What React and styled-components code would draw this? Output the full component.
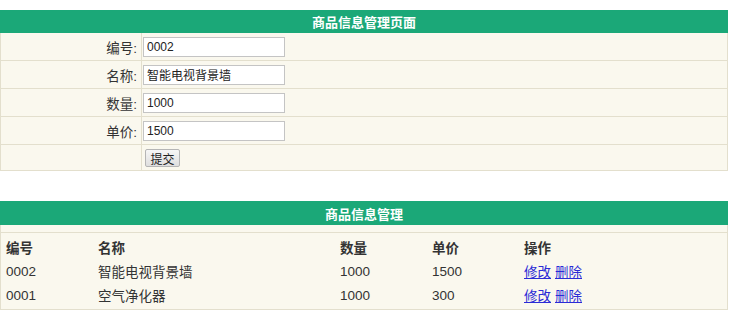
import React from 'react'
import styled, { createGlobalStyle } from 'styled-components'

const GlobalStyle = createGlobalStyle`
  body {
    margin: 0;
    background: #fff;
    font-family: 'Liberation Sans', 'Noto Sans CJK SC', sans-serif;
    color: #333;
  }
`

const Page = styled.div`
  padding-top: 10px;
  width: 728px;
  display: flex;
  flex-direction: column;
  gap: 30px;
`

const Panel = styled.section`
  background: #faf8ee;
  border: 1px solid #e3dfcd;
  border-top: none;
`

const Title = styled.div`
  height: ${p => p.$h}px;
  background: #1ba878;
  color: #fff;
  font-weight: bold;
  font-size: 13px;
  display: flex;
  align-items: center;
  justify-content: center;
  margin-right: -1px;
  margin-left: -1px;
`

const FormRow = styled.div`
  display: grid;
  grid-template-columns: 141px 1fr;
  height: ${p => p.$h || 27}px;
  border-bottom: 1px solid #e3dfcd;
  &:last-child {
    border-bottom: none;
  }
`

const Label = styled.label`
  border-right: 1px solid #e3dfcd;
  display: flex;
  align-items: center;
  justify-content: flex-end;
  padding-right: 4px;
  font-size: 13.5px;
  color: #333;
`

const Field = styled.div`
  display: flex;
  align-items: center;
  padding-left: 1px;
`

const Input = styled.input`
  box-sizing: border-box;
  width: 142px;
  height: 20px;
  border: 1px solid #c4c4c4;
  background: #fff;
  padding: 0 3px;
  font-family: 'Liberation Sans', 'Noto Sans CJK SC', sans-serif;
  font-size: 12px;
  color: #222;
  outline: none;
`

const Button = styled.button`
  box-sizing: border-box;
  margin-left: 2px;
  width: 35px;
  height: 18px;
  padding: 0;
  border: 1px solid #b5b5b5;
  border-radius: 2px;
  background: linear-gradient(#f6f6f6, #dedede);
  font-family: 'Noto Sans CJK SC', sans-serif;
  font-size: 12px;
  color: #222;
`

const Spacer = styled.div`
  height: 7px;
  border-bottom: 1px solid #e3dfcd;
`

const ListBody = styled.div`
  padding: 2px 0 2px;
`

const ListRow = styled.div`
  display: grid;
  grid-template-columns: 92px 242px 92px 92px 1fr;
  height: 24px;
  align-items: center;
  padding-left: 5px;
  font-size: 13.5px;
  font-weight: ${p => (p.$head ? 'bold' : 'normal')};
  color: #333;
`

const Actions = styled.span`
  display: flex;
  gap: 4px;
`

const Action = styled.a`
  color: #2b2bd6;
  text-decoration: underline;
  cursor: pointer;
`

const fields = [
  { label: '编号', value: '0002' },
  { label: '名称', value: '智能电视背景墙' },
  { label: '数量', value: '1000' },
  { label: '单价', value: '1500' },
]

const goods = [
  { id: '0002', name: '智能电视背景墙', qty: '1000', price: '1500' },
  { id: '0001', name: '空气净化器', qty: '1000', price: '300' },
]

export default function App() {
  return (
    <>
      <GlobalStyle />
      <Page>
        <Panel>
          <Title $h={23}>商品信息管理页面</Title>
          {fields.map(f => (
            <FormRow key={f.label}>
              <Label>{f.label}:</Label>
              <Field>
                <Input defaultValue={f.value} />
              </Field>
            </FormRow>
          ))}
          <FormRow $h={25}>
            <Label />
            <Field>
              <Button>提交</Button>
            </Field>
          </FormRow>
        </Panel>

        <Panel>
          <Title $h={24}>商品信息管理</Title>
          <Spacer />
          <ListBody>
            <ListRow $head>
              <span>编号</span>
              <span>名称</span>
              <span>数量</span>
              <span>单价</span>
              <span>操作</span>
            </ListRow>
            {goods.map(g => (
              <ListRow key={g.id}>
                <span>{g.id}</span>
                <span>{g.name}</span>
                <span>{g.qty}</span>
                <span>{g.price}</span>
                <Actions>
                  <Action>修改</Action>
                  <Action>删除</Action>
                </Actions>
              </ListRow>
            ))}
          </ListBody>
        </Panel>
      </Page>
    </>
  )
}
